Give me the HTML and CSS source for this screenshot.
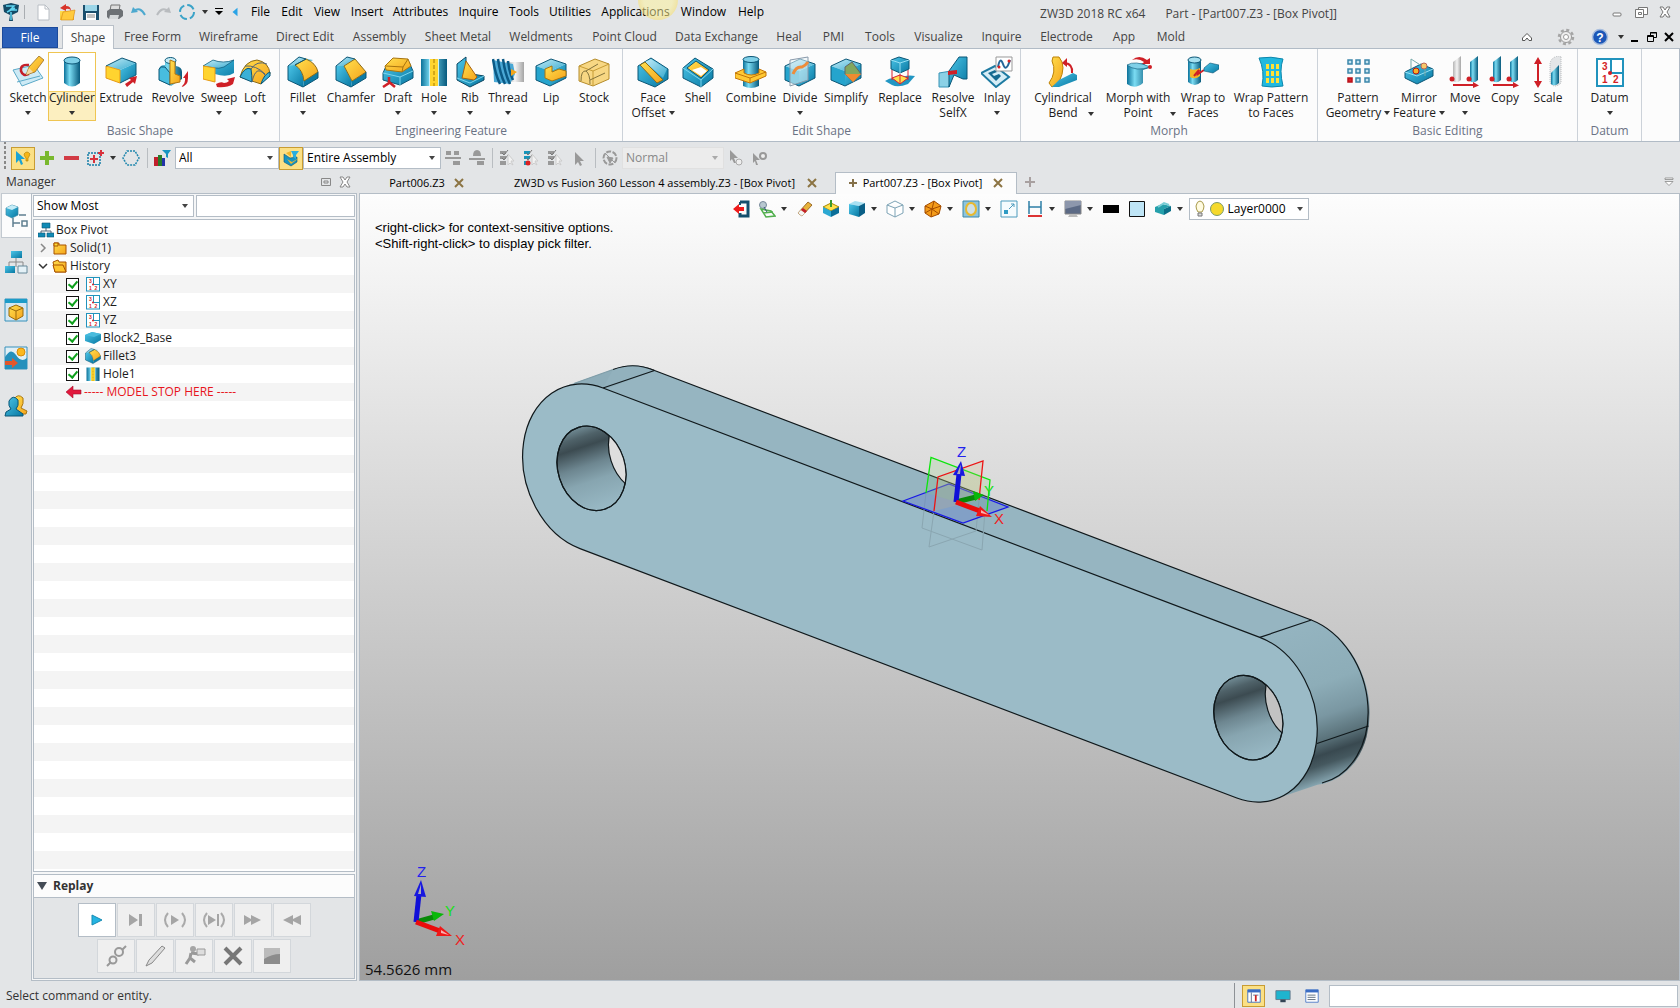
FILE: index.html
```html
<!DOCTYPE html>
<html lang="en">
<head>
    <meta charset="UTF-8">
    <title>ZW3D 2018 RC x64</title>
    <link rel="stylesheet" href="styles.css">
</head>
<body>
<svg class="defs" width="0" height="0" aria-hidden="true">
    <defs>
        <linearGradient id="b" x1="0" y1="0" x2="1" y2="1"><stop offset="0" stop-color="#4cc5e8"/><stop offset="1" stop-color="#0878a2"/></linearGradient>
        <linearGradient id="bl" x1="0" y1="0" x2="1" y2="1"><stop offset="0" stop-color="#c4ecf7"/><stop offset="1" stop-color="#38abd0"/></linearGradient>
        <linearGradient id="bc"><stop offset="0" stop-color="#0b7199"/><stop offset=".35" stop-color="#7bdcf3"/><stop offset="1" stop-color="#07597c"/></linearGradient>
        <linearGradient id="y" x1="0" y1="0" x2="1" y2="1"><stop offset="0" stop-color="#ffe04f"/><stop offset="1" stop-color="#f5a31b"/></linearGradient>
        <linearGradient id="g" x1="0" y1="0" x2="1" y2="0"><stop offset="0" stop-color="#b5b5b5"/><stop offset=".5" stop-color="#f4f4f4"/><stop offset="1" stop-color="#a5a5a5"/></linearGradient>
        <linearGradient id="endcap" gradientUnits="userSpaceOnUse" x1="1260" y1="637" x2="1311" y2="787">
            <stop offset="0" stop-color="#94b4c0"/><stop offset=".4" stop-color="#8dadb8"/><stop offset=".6" stop-color="#7a97a2"/><stop offset=".74" stop-color="#5b737b"/><stop offset=".83" stop-color="#394950"/><stop offset=".89" stop-color="#45585f"/><stop offset="1" stop-color="#86a5b0"/>
        </linearGradient>
        <linearGradient id="bore" gradientUnits="userSpaceOnUse" x1="-13" y1="-39" x2="13" y2="39" gradientTransform="rotate(-72.4)">
            <stop offset="0" stop-color="#6b848d"/><stop offset=".1" stop-color="#4f6269"/><stop offset=".22" stop-color="#3c4b51"/><stop offset=".45" stop-color="#6d8690"/><stop offset=".65" stop-color="#87a5b0"/><stop offset="1" stop-color="#98b8c4"/>
        </linearGradient>
        <clipPath id="hole"><ellipse rx="43" ry="33.5" transform="rotate(72.4)"/></clipPath>
    </defs>
    <symbol id="box" viewBox="0 0 32 32">
        <path d="M1 10 16 3 31 8 15 15Z" fill="url(#bl)"/><path d="M15 15 31 8V22L15 30Z" fill="url(#b)"/><path d="M1 10 15 15V30L1 24Z" fill="#25a4cd"/><path d="M1 10 16 3 31 8V22L15 30 1 24Z" fill="none" stroke="#0b5676"/>
    </symbol>
    <symbol id="datum" viewBox="0 0 32 32">
        <rect x="3" y="3" width="26" height="27" fill="#fff" stroke="#2193bd" stroke-width="2"/><path d="M17 3V17H29" fill="none" stroke="#2193bd" stroke-width="2"/><circle cx="16" cy="17" r="2" fill="#d51f26"/>
    </symbol>
    <symbol id="fillet" viewBox="0 0 32 32">
        <path d="M1 10 12 1 26 4 15 11Z" fill="url(#bl)"/><path d="M1 10 8 9Q15 13 17 24L16 31 1 24Z" fill="url(#b)"/><path d="M17 24 31 15V22L16 31Z" fill="#0d7ba4"/><path d="M8 9 19 3Q29 7 31 16L17 25Q16 14 8 9Z" fill="url(#y)" stroke="#8a6b1a"/><path d="M8 9 19 3 12 1 1 10V24L16 31 31 22V16" fill="none" stroke="#0b5676"/>
    </symbol>
    <symbol id="holei" viewBox="0 0 32 32">
        <rect x="3" y="3" width="26" height="27" fill="url(#bc)"/><rect x="12" y="3" width="8" height="27" fill="#ffd52e"/><path d="M11.500 3V30M20.500 3V30" stroke="#c7f0fa"/><path d="M16 3V30" stroke="#a97a00" stroke-dasharray="4 2"/>
    </symbol>
    <symbol id="pen" viewBox="0 0 18 18"><path d="M5 3 14 12 10 12 12 16 10 17 8 13 5 16Z"/></symbol>
    <symbol id="chk" viewBox="0 0 18 18"><path d="M2 2h6v3H2zM2 7h6v3H2zM2 12h6v4H2z"/><path d="M4 4 6 6 10 1M4 9 6 11 10 6" fill="none" stroke="#777"/><path d="M10 5 16 12 13 12 15 16 12 14 10 16Z" fill="#f2f2f2" stroke="#ccc"/></symbol>
    <symbol id="caret" viewBox="0 0 6 4"><path d="M0 0H6L3 4Z"/></symbol>
    <symbol id="x" viewBox="0 0 10 10"><path d="M1 1 9 9M9 1 1 9" stroke="#8c7443" stroke-width="2"/></symbol>
</svg>

<header class="titlebar">
    <svg class="logo" viewBox="0 0 18 20"><path d="M1 3 9 1 17 3 16 10 10 13 11 19H7L8 13 2 10Z" fill="#144b67"/><path d="M4 4h8L8 8h7M5 10 13 6M9 10v8" stroke="#5fd3ef" stroke-width="1.500" fill="none"/></svg>
    <div class="quick">
        <button aria-label="New"><svg viewBox="0 0 18 18"><path d="M4 2H11L15 6V17H4Z" fill="#fff" stroke="#b9bec4"/><path d="M11 2V6H15" fill="none" stroke="#b9bec4"/></svg></button>
        <button aria-label="Open"><svg viewBox="0 0 18 18"><path d="M2 8H16V17H2Z" fill="url(#y)"/><path d="M5 9 17 7 15 17 3 17Z" fill="#ffca3d" stroke="#d58a12" stroke-width=".6"/><path d="M8 1 2 5 8 8V6Q12 5 13 8 13 3 8 3Z" fill="#d8342a"/></svg></button>
        <button aria-label="Save"><svg viewBox="0 0 18 18"><path d="M1 2H17V17H1Z" fill="#1c4f6d"/><path d="M3 2H15V8H3Z" fill="#9bd5e8"/><path d="M4 10H14V17H4Z" fill="#fff"/><path d="M5 12H13M5 14H13" stroke="#888"/></svg></button>
        <button aria-label="Print"><svg viewBox="0 0 18 18"><path d="M5 2H14L13 8H4Z" fill="#ddd" stroke="#777"/><path d="M1 8 4 6H15L17 8V13L13 16H3L1 14Z" fill="#6d7175"/><path d="M4 12H13L12 16H3Z" fill="#d5d8da"/></svg></button>
        <button aria-label="Undo"><svg viewBox="0 0 18 18"><path d="M4 8Q10 3 15 12" fill="none" stroke="#4da9cf" stroke-width="2"/><path d="M1 10 3 4 8 9Z" fill="#4da9cf"/></svg></button>
        <button aria-label="Redo"><svg viewBox="0 0 18 18"><path d="M14 8Q8 3 3 12" fill="none" stroke="#b9bcbf" stroke-width="2"/><path d="M17 10 15 4 10 9Z" fill="#b9bcbf"/></svg></button>
        <button aria-label="Regenerate"><svg viewBox="0 0 18 18"><circle cx="9" cy="9" r="7" fill="none" stroke="#3ba3c8" stroke-width="2" stroke-dasharray="8 3"/></svg></button>
        <button class="slim" aria-label="More"><svg class="caret"><use href="#caret"/></svg></button>
        <button class="mid" aria-label="Customize"><svg viewBox="0 0 10 10"><path d="M1 1H9V2H1ZM1 4H9L5 8Z"/></svg></button>
        <button class="mid" aria-label="Collapse menu"><svg viewBox="0 0 10 12"><path d="M8 1V11L2 6Z" fill="#2aa3e6"/></svg></button>
    </div>
    <nav class="menu">
        <a href="#">File</a><a href="#">Edit</a><a href="#">View</a><a href="#">Insert</a><a href="#">Attributes</a><a href="#">Inquire</a><a href="#">Tools</a><a href="#">Utilities</a><a href="#" class="pointed">Applications</a><a href="#">Window</a><a href="#">Help</a>
    </nav>
    <div class="title"><span>ZW3D 2018 RC x64</span><span>Part - [Part007.Z3 - [Box Pivot]]</span></div>
    <div class="winbtns">
        <button aria-label="Minimize"><svg viewBox="0 0 14 14"><rect x="3" y="8" width="8" height="3" rx="1" fill="#fff" stroke="#777"/></svg></button>
        <button aria-label="Restore"><svg viewBox="0 0 14 14" fill="#fff" stroke="#777"><path d="M4.500 2.500H13.500V9.500H4.500Z"/><path d="M1.500 4.500H9.500V12.500H1.500ZM4.500 7.500H7.500V9.500H4.500Z"/></svg></button>
        <button aria-label="Close"><svg viewBox="0 0 14 14"><path d="M2 2H5L7 5 9 2H12L9 7 12 12H9L7 9 5 12H2L5 7Z" fill="#fff" stroke="#777"/></svg></button>
    </div>
</header>

<div class="tabbar">
    <button class="file-tab">File</button>
    <nav class="tabs">
        <button class="on">Shape</button><button>Free Form</button><button>Wireframe</button><button>Direct Edit</button><button>Assembly</button><button>Sheet Metal</button><button>Weldments</button><button>Point Cloud</button><button>Data Exchange</button><button>Heal</button><button>PMI</button><button>Tools</button><button>Visualize</button><button>Inquire</button><button>Electrode</button><button>App</button><button>Mold</button>
    </nav>
    <div class="tabtools">
        <button aria-label="Collapse ribbon"><svg viewBox="0 0 14 14"><path d="M2.500 8 7 3.500 11.500 8V10.500H9L7 8 5 10.500H2.500Z" fill="#fff" stroke="#555"/></svg></button>
        <button aria-label="Settings"><svg viewBox="0 0 18 18"><circle cx="9" cy="9" r="7" fill="none" stroke="#a5a5a5" stroke-width="2.500" stroke-dasharray="3 2.500"/><circle cx="9" cy="9" r="5.500" fill="#eee" stroke="#999"/><circle cx="9" cy="9" r="2.500" fill="#fff" stroke="#999"/></svg></button>
        <button class="help" aria-label="Help"><svg viewBox="0 0 18 18"><circle cx="9" cy="9" r="7.500" fill="#1c57b8" stroke="#a8bede" stroke-width="1.500"/><text x="9" y="13.500" text-anchor="middle" font-family="Liberation Sans,sans-serif" font-weight="bold" font-size="12" fill="#fff">?</text></svg></button>
        <button class="slim" aria-label="Help menu"><svg class="caret"><use href="#caret"/></svg></button>
        <button class="win" aria-label="Minimize document"><svg viewBox="0 0 12 12"><path d="M2 9H9V11H2Z"/></svg></button>
        <button class="win" aria-label="Restore document"><svg viewBox="0 0 12 12" fill="none" stroke="#000"><path d="M4.500 4V1.500H10.500V6.500H8M1.500 4.500H7.500V10.500H1.500ZM4 2H11M1 5.500H8" /></svg></button>
        <button class="win" aria-label="Close document"><svg viewBox="0 0 12 12"><path d="M2 2 10 10M10 2 2 10" stroke="#000" stroke-width="2"/></svg></button>
    </div>
</div>

<div class="ribbon">
    <section class="group g-basic">
        <div class="btns">
            <button><svg viewBox="0 0 32 32"><path d="M1 14 22 9 31 22 10 30Z" fill="#cdeaf5" stroke="#5ba9c8"/><path d="M5 26 28 20" stroke="#5ba9c8"/><path d="M17 9Q8 8 9 15 11 21 17 18" fill="none" stroke="#c41f2a" stroke-width="2.500"/><path d="M14 19 17 11 27 0 32 4 23 16Z" fill="url(#y)" stroke="#8d5d12" stroke-width=".7"/><path d="M14 19 17 12 21 16Z" fill="#f3d9a8"/></svg><span>Sketch</span><svg class="caret"><use href="#caret"/></svg></button>
            <button class="active"><svg viewBox="0 0 32 32"><path d="M8 4V27Q16 34 24 27V4Z" fill="url(#bc)"/><ellipse cx="16" cy="4.500" rx="8" ry="3.500" fill="#7fd0e8" stroke="#0b5676"/></svg><span>Cylinder</span><svg class="caret"><use href="#caret"/></svg></button>
            <button><svg viewBox="0 0 32 32"><path d="M1 10 17 2 31 7 15 14Z" fill="url(#bl)"/><path d="M15 14 31 7V19L15 27Z" fill="url(#b)"/><path d="M1 10 15 14V27L1 22Z" fill="#ffd42f" stroke="#e89a14"/><path d="M1 10 17 2 31 7V19L15 27" fill="none" stroke="#0b5676"/><path d="M20 28 26 24 24 22 32 20 30 28 28 26 22 31Z" fill="#cf2027"/></svg><span>Extrude</span></button>
            <button><svg viewBox="0 0 32 32"><path d="M8 4Q13-1 19 4V10Q25 11 25 16V23L14 30 2 24V13Q3 9 8 9Z" fill="url(#bc)"/><ellipse cx="13.500" cy="4.500" rx="5.500" ry="3" fill="#c4ecf7" stroke="#0b5676"/><path d="M2 13Q4 10 8 11L13 17V29L2 24Z" fill="#48bddf" stroke="#0b5676"/><path d="M13 4 18 6V18L23 20V26L13 28Z" fill="url(#y)" stroke="#b47710"/><path d="M24 31Q29 27 28 22L26 22 31 15 31 22Q31 30 24 31Z" fill="#cf2027"/></svg><span>Revolve</span></button>
            <button><svg viewBox="0 0 32 32"><path d="M0 10 10 4Q20 8 31 4V17Q24 22 12 18V26L0 22Z" fill="url(#b)"/><path d="M0 10 10 4Q20 8 31 4L21 11Q15 13 12 12Z" fill="url(#bl)" stroke="#0b5676" stroke-width=".7"/><path d="M0 10 12 12V26L0 23Z" fill="#ffd42f" stroke="#e89a14"/><path d="M13 28Q18 25 21 27 24 27 26 25L24 23 32 21 30 28Q24 32 14 31Z" fill="#cf2027"/></svg><span>Sweep</span><svg class="caret"><use href="#caret"/></svg></button>
            <button><svg viewBox="0 0 32 32"><path d="M1 21Q5 5 18 4 30 6 31 18L22 28Z" fill="url(#y)" stroke="#8a6b1a"/><path d="M1 21Q6 10 12 13 13 19 13 26ZM22 28Q25 18 31 16V20Z" fill="#3ab0d6" stroke="#0b5676"/><path d="M12 13Q18 4 28 8M13 26Q17 8 26 19M6 10Q17 9 26 18" fill="none" stroke="#567"/></svg><span>Loft</span><svg class="caret"><use href="#caret"/></svg></button>
        </div>
        <h2>Basic Shape</h2>
    </section>
    <section class="group g-eng">
        <div class="btns">
            <button><svg><use href="#fillet"/></svg><span>Fillet</span><svg class="caret"><use href="#caret"/></svg></button>
            <button><svg viewBox="0 0 32 32"><path d="M1 10 12 1 20 3 9 10Z" fill="url(#bl)"/><path d="M1 10 9 10 17 25 16 31 1 24Z" fill="url(#b)"/><path d="M17 25 31 16V22L16 31Z" fill="#0d7ba4"/><path d="M9 10 20 3 31 16 17 25Z" fill="url(#y)" stroke="#8a6b1a"/><path d="M20 3 12 1 1 10V24L16 31 31 22V16" fill="none" stroke="#0b5676"/></svg><span>Chamfer</span></button>
            <button><svg viewBox="0 0 32 32"><path d="M1 17 5 8 27 6 31 15V22L18 29 1 24Z" fill="url(#b)" stroke="#0b5676"/><path d="M1 17 18 21 31 15M18 21V29" fill="none" stroke="#7bd5ee"/><path d="M3 10 11 2 26 3 29 10 20 16 4 14Z" fill="url(#y)" stroke="#a8740f"/><path d="M4 10 21 11 26 3M21 11 20 16" fill="none" stroke="#a8740f"/><path d="M7 21V27L1 31M7 26 13 31" stroke="#cf2027" stroke-width="2.500" fill="none"/></svg><span>Draft</span><svg class="caret"><use href="#caret"/></svg></button>
            <button><svg><use href="#holei"/></svg><span>Hole</span><svg class="caret"><use href="#caret"/></svg></button>
            <button><svg viewBox="0 0 32 32"><path d="M3 8 12 1V17L30 20V24L16 31 3 24Z" fill="url(#b)" stroke="#0b4560"/><path d="M8 22 12 5 23 21 20 24Z" fill="url(#y)" stroke="#a8620f"/><path d="M3 22 16 27 30 20" fill="none" stroke="#7bd5ee"/></svg><span>Rib</span><svg class="caret"><use href="#caret"/></svg></button>
            <button><svg viewBox="0 0 32 32"><path d="M14 6H32V26H14Z" fill="url(#g)"/><path d="M1 4 21 8 23 18 18 28 2 26Z" fill="#4aa8d5"/><path d="M1 3Q3 18 8 28M6 3Q8 18 13 28M11 3Q13 18 18 28M16 5Q17 16 21 24" fill="none" stroke="#0b5a86" stroke-width="2.500"/><path d="M19 13 25 16 19 20Z" fill="#f2a51b"/></svg><span>Thread</span><svg class="caret"><use href="#caret"/></svg></button>
            <button><svg viewBox="0 0 32 32"><use href="#box"/><path d="M10 13 17 10V16L24 13 31 15V20L17 25 10 22Z" fill="url(#y)" stroke="#a8740f"/></svg><span>Lip</span></button>
            <button><svg viewBox="0 0 32 32"><path d="M1 10 17 3 31 8V23L15 30 1 25Z" fill="#f7d783" stroke="#b58c2b"/><path d="M1 10 15 15 31 8M15 15V30" fill="none" stroke="#c79c35"/><path d="M3 25Q3 14 8 15 12 18 12 28M8 15 20 8M12 24 27 17" fill="none" stroke="#83733c"/></svg><span>Stock</span></button>
        </div>
        <h2>Engineering Feature</h2>
    </section>
    <section class="group g-edit">
        <div class="btns">
            <button><svg viewBox="0 0 32 32"><path d="M1 10 14 2 31 13V23L18 31 1 24Z" fill="url(#b)" stroke="#0b5676"/><path d="M8 6 14 3 30 13 26 22Z" fill="url(#bl)"/><path d="M3 9 8 6 26 24 20 27Z" fill="url(#y)" stroke="#8a6b1a"/></svg><span>Face</span><span class="two">Offset<svg class="caret"><use href="#caret"/></svg></span></button>
            <button><svg viewBox="0 0 32 32"><path d="M1 12 13 2 31 13V22L19 31 1 22Z" fill="url(#b)" stroke="#0b5676"/><path d="M5 12 14 5 27 14 19 22Z" fill="url(#y)" stroke="#0b5676"/><path d="M10 14 19 11 25 15 19 20Z" fill="#fff"/><path d="M1 12 19 24 31 13M19 24V31" fill="none" stroke="#7bd5ee"/></svg><span>Shell</span></button>
            <button><svg viewBox="0 0 32 32"><path d="M8 3V30Q16 34 24 30V3Z" fill="url(#bc)"/><ellipse cx="16" cy="3.500" rx="8" ry="3" fill="#7fd0e8" stroke="#0b5676"/><path d="M0 17 9 13V17Q16 21 24 17V13L31 16V20L15 27 0 22Z" fill="#ffc933" stroke="#c27409"/><path d="M0 17 15 22 31 16M15 22V27" fill="none" stroke="#c27409"/></svg><span>Combine</span></button>
            <button><svg viewBox="0 0 32 32"><use href="#box"/><path d="M6 4 24 1V24L6 30Z" fill="#e9f4f8" fill-opacity=".55" stroke="#89a"/><path d="M9 18Q12 10 18 11 22 9 24 6" fill="none" stroke="#ee8c3a" stroke-width="3"/></svg><span>Divide</span><svg class="caret"><use href="#caret"/></svg></button>
            <button><svg viewBox="0 0 32 32"><use href="#box"/><path d="M15 11 22 6 31 18 23 26 15 18Z" fill="#82a75e" stroke="#666"/><path d="M15 18 31 18 23 26Z" fill="#f08b30"/></svg><span>Simplify</span></button>
            <button><svg viewBox="0 0 32 32"><path d="M1 25Q8 20 14 23 22 18 31 20L24 28Q14 32 8 29Z" fill="#2196c3"/><path d="M8 22 16 19 24 22 16 28Z" fill="#ffe04f" stroke="#d9232e"/><path d="M8 14V24M16 18V28M24 14V24" stroke="#d9232e"/><path d="M7 4 15 1 25 4V13L16 17 7 13Z" fill="url(#b)" stroke="#0b5676"/><path d="M7 4 16 7 25 4M16 7V17" fill="none" stroke="#95dff3"/></svg><span>Replace</span></button>
            <button><svg viewBox="0 0 32 32"><path d="M2 17 14 15V22L12 31H2Z" fill="#8bd1e6" stroke="#3894b6"/><path d="M12 15 22 1H30V23H26L17 19 12 31Z" fill="url(#b)" stroke="#0b5676"/><path d="M11 15 20 14V18L11 19Z" fill="#cf2027"/></svg><span>Resolve</span><span class="two">SelfX</span></button>
            <button><svg viewBox="0 0 32 32"><path d="M0 17 14 10 28 21 15 31Z" fill="#d6edf6" stroke="#1e7ba2" stroke-width="2"/><path d="M7 17 14 14 16 16 11 18 13 20 18 18 20 20 15 25Z" fill="#156a91"/><path d="M15 1H31V15H15Z" fill="#fff" stroke="#999"/><path d="M17 11Q19 0 22 8 25 17 29 4" fill="none" stroke="#26679a" stroke-width="2"/><circle cx="18" cy="11" r="1.500" fill="#d22"/><circle cx="28" cy="5" r="1.500" fill="#d22"/></svg><span>Inlay</span><svg class="caret"><use href="#caret"/></svg></button>
        </div>
        <h2>Edit Shape</h2>
    </section>
    <section class="group g-morph">
        <div class="btns">
            <button><svg viewBox="0 0 32 32"><path d="M6 1H12Q20 10 12 26L5 31 2 27Q10 16 5 5Z" fill="url(#y)" stroke="#bd8104"/><path d="M12 24 26 17 30 19V24L12 31 5 31Z" fill="url(#b)"/><path d="M25 17Q26 8 18 7" fill="none" stroke="#cf2027" stroke-width="2"/><path d="M15 7 20 2V11Z" fill="#cf2027"/></svg><span>Cylindrical</span><span class="two">Bend</span><svg class="caret corner"><use href="#caret"/></svg></button>
            <button><svg viewBox="0 0 32 32"><path d="M5 9 21 7 27 12 21 14V27Q13 34 5 28Z" fill="url(#bc)"/><path d="M5 9Q13 4 28 11 14 16 5 9Z" fill="#7fd0e8" stroke="#0b5676" stroke-width=".6"/><path d="M10 4Q17-2 25 4L28 2V8L20 8 22 6Q17 2 10 4Z" fill="#cf2027"/><circle cx="28" cy="11" r="2" fill="#cf2027"/></svg><span>Morph with</span><span class="two">Point</span><svg class="caret corner"><use href="#caret"/></svg></button>
            <button><svg viewBox="0 0 32 32"><path d="M1 4V26Q8 32 14 26V4Z" fill="url(#bc)"/><ellipse cx="7.500" cy="4" rx="6.500" ry="3" fill="#a5e0f0" stroke="#0b5676"/><path d="M3 13Q8 15 13 12V20Q8 24 3 21Z" fill="#f5b526"/><path d="M7 20 12 14 11 18 17 14" fill="none" stroke="#cf2027" stroke-width="2"/><path d="M17 12 23 7 32 9V13L26 17 17 15Z" fill="url(#b)" stroke="#0b5676" stroke-width=".6"/></svg><span>Wrap to</span><span class="two">Faces</span></button>
            <button><svg viewBox="0 0 32 32"><path d="M4 2Q16 0 28 3 24 14 28 30 16 32 7 30 10 15 4 2Z" fill="#22b9df" stroke="#0c86ac"/><path d="M11 8h3v5h-3zM16 8h3v5h-3zM21 8h3v5h-3zM11 15h3v5h-3zM16 15h3v5h-3zM21 15h3v5h-3zM11 22h3v5h-3zM16 22h3v5h-3zM21 22h3v5h-3z" fill="#ffe138"/></svg><span>Wrap Pattern</span><span class="two">to Faces</span></button>
        </div>
        <h2>Morph</h2>
    </section>
    <section class="group g-editing">
        <div class="btns">
            <button><svg viewBox="0 0 32 32" fill="#c5e4f1" stroke="#3b86ab" stroke-width="1.500"><path d="M6 4h4v4H6zM14 4h4v4h-4zM23 4h4v4h-4zM6 13h4v4H6zM14 13h4v4h-4zM23 13h4v4h-4zM14 22h4v4h-4zM23 22h4v4h-4z"/><path d="M6 22h4v4H6z" fill="#d9222a" stroke="#b9121a"/></svg><span>Pattern</span><span class="two">Geometry<svg class="caret"><use href="#caret"/></svg></span></button>
            <button><svg viewBox="0 0 32 32"><path d="M2 16 18 8 30 13V20L14 28 2 22Z" fill="url(#b)" stroke="#0b5676"/><path d="M2 16 14 20 30 13" fill="none" stroke="#95dff3"/><path d="M8 3 22 12V20M8 3V13" fill="none" stroke="#7aa"/><ellipse cx="13" cy="15" rx="3" ry="3" fill="#f6b226" stroke="#b11"/><ellipse cx="21" cy="10" rx="3" ry="3" fill="#f6c96a" stroke="#b65"/></svg><span>Mirror</span><span class="two">Feature<svg class="caret"><use href="#caret"/></svg></span></button>
            <button><svg viewBox="0 0 32 32"><path d="M4 6 12 0V24Q8 28 4 25Z" fill="url(#g)"/><path d="M21 6 29 0V24Q25 28 21 25Z" fill="url(#bc)"/><circle cx="3" cy="23" r="2.500" fill="#cf2027"/><circle cx="20" cy="23" r="2.500" fill="#cf2027"/><path d="M4 28H24V26L30 29.500 24 32V30H4Z" fill="#cf2027"/></svg><span>Move</span><svg class="caret"><use href="#caret"/></svg></button>
            <button><svg viewBox="0 0 32 32"><path d="M4 6 12 0V24Q8 28 4 25Z" fill="url(#bc)"/><path d="M21 6 29 0V24Q25 28 21 25Z" fill="url(#bc)"/><circle cx="3" cy="23" r="2.500" fill="#cf2027"/><circle cx="20" cy="23" r="2.500" fill="#cf2027"/><path d="M4 28H24V26L30 29.500 24 32V30H4Z" fill="#cf2027"/></svg><span>Copy</span></button>
            <button><svg viewBox="0 0 32 32"><path d="M18 8Q19 0 29 0V27Q23 33 18 27Z" fill="#e3e5e7" stroke="#b5b8bb" stroke-dasharray="1 1"/><path d="M19 17 27 9V27Q23 31 19 28Z" fill="url(#bc)"/><path d="M6 1 10 8H7V25H10L6 32 2 25H5V8H2Z" fill="#cf2027"/></svg><span>Scale</span></button>
        </div>
        <h2>Basic Editing</h2>
    </section>
    <section class="group g-datum">
        <div class="btns">
            <button><svg class="nums" viewBox="0 0 32 32"><use href="#datum"/><text x="8" y="14">3</text><text x="8" y="27">1</text><text x="19" y="27">2</text></svg><span>Datum</span><svg class="caret"><use href="#caret"/></svg></button>
        </div>
        <h2>Datum</h2>
    </section>
</div>

<div class="pickbar">
    <button class="lit" aria-label="Pick"><svg viewBox="0 0 18 18"><path d="M2 2 11 10 7 10 9 15 7 16 5 11 2 14Z" fill="#1aa3d4"/><path d="M10 5Q13 1 16 5 15 8 14 9V12H12V9Q10 7 10 5Z" fill="#f7b616" stroke="#a87900" stroke-width=".6"/></svg></button>
    <button aria-label="Add"><svg viewBox="0 0 18 18"><path d="M7 2H11V7H16V11H11V16H7V11H2V7H7Z" fill="#79b82e"/></svg></button>
    <button aria-label="Remove"><svg viewBox="0 0 18 18"><path d="M2 7H17V11H2Z" fill="#d23b45"/></svg></button>
    <button aria-label="Window pick"><svg viewBox="0 0 18 18"><path d="M2 4H14V16H2Z" fill="none" stroke="#167ea8" stroke-width="1.500" stroke-dasharray="2 1"/><path d="M8 6V14M4 10H12M15 1V7M12 4H18" stroke="#d8323c" stroke-width="2"/></svg></button>
    <button class="slim" aria-label="Window pick options"><svg class="caret"><use href="#caret"/></svg></button>
    <button aria-label="Polygon pick"><svg viewBox="0 0 18 18"><path d="M5 2H13L17 9 13 16H5L1 9Z" fill="none" stroke="#2187ad" stroke-width="1.500" stroke-dasharray="2 1"/></svg></button>
    <i class="sep"></i>
    <button aria-label="Filter"><svg viewBox="0 0 18 18"><path d="M1 8H5V17H1Z" fill="#c11f2c"/><path d="M5 6H9V17H5Z" fill="#287b2a"/><path d="M9 9H12V17H9Z" fill="#2233a8"/><path d="M9 1H18L15 5V9L13 8V5Z" fill="#1795c2"/></svg></button>
    <div class="combo c-all"><select aria-label="Pick filter"><option>All</option></select></div>
    <button class="lit" aria-label="Pick scope"><svg viewBox="0 0 18 18"><path d="M2 5 8 9 15 8V13L9 17 2 13Z" fill="#1794c0" stroke="#0b5676" stroke-width=".6"/><path d="M4 4 9 2 9 8Z" fill="#f1b62b"/><path d="M5 10 10 13 17 9 9 15Z" fill="#f1b62b"/><path d="M9 2H17L14 6V10L11 8V6Z" fill="#29aede"/></svg></button>
    <div class="combo c-entire"><select aria-label="Scope"><option>Entire Assembly</option></select></div>
    <button class="dim" aria-label="Chain"><svg viewBox="0 0 18 18"><path d="M2 2h5v4H2zM10 2h5v4h-5zM1 8h16v2H1zM9 12h7v4H9z"/></svg></button>
    <button class="dim" aria-label="Loop"><svg viewBox="0 0 18 18"><path d="M5 7Q5 1 9 1T13 7ZM1 9h16v2H1zM9 12h7v4H9z"/></svg></button>
    <i class="sep near"></i>
    <button class="dim" aria-label="Pick all"><svg><use href="#chk"/></svg></button>
    <button aria-label="Pick last"><svg viewBox="0 0 18 18"><use href="#chk" fill="#1694ba"/><circle cx="6" cy="14" r="2.500" fill="#d22"/></svg></button>
    <button class="dim" aria-label="Pick list"><svg><use href="#chk"/></svg></button>
    <button class="dim" aria-label="Pick next"><svg><use href="#pen"/></svg></button>
    <i class="sep"></i>
    <button class="dim" aria-label="Hide"><svg viewBox="0 0 18 18"><circle cx="9" cy="9" r="6.500" fill="none" stroke="#999" stroke-width="2" stroke-dasharray="5 1.500"/><path d="M4 4 14 14M6 8 12 9 9 14Z" stroke="#999"/></svg></button>
    <div class="combo c-normal"><select aria-label="Mode" disabled><option>Normal</option></select></div>
    <button class="dim" aria-label="Pick point"><svg viewBox="0 0 18 18"><path d="M3 1 11 9 7 9 9 14 7 14 5 10 3 12Z"/><circle cx="12" cy="13" r="3" fill="#eee" stroke="#aaa"/></svg></button>
    <button class="dim" aria-label="Pick options"><svg viewBox="0 0 18 18"><path d="M2 4 9 11 5 11 7 16 5 16 4 12 2 14Z"/><circle cx="12" cy="7" r="3" fill="#eee" stroke="#999" stroke-width="2"/></svg></button>
</div>

<main class="work">
    <aside class="manager">
        <div class="mgr-title"><span>Manager</span>
            <button aria-label="Float"><svg viewBox="0 0 14 14"><path d="M2.500 3.500H11.500V10.500H2.500ZM5 6H9V8H5Z" fill="none" stroke="#888"/></svg></button>
            <button aria-label="Close manager"><svg viewBox="0 0 14 14"><path d="M2 2H5L7 5 9 2H12L9 7 12 12H9L7 9 5 12H2L5 7Z" fill="#fff" stroke="#888"/></svg></button>
        </div>
        <div class="mgr-body">
            <nav class="rail">
                <button class="on" aria-label="History"><svg viewBox="0 0 24 24"><path d="M1 4 7 1 13 3V11L7 14 1 11Z" fill="url(#b)" stroke="#3a86a5" stroke-width=".7"/><path d="M1 4 7 6 13 3 7 1Z" fill="#c4ecf7"/><path d="M14 11H21M8 14V23M8 19H15M17 17h5v5h-5z" fill="none" stroke="#5f7f90" stroke-width="1.500"/></svg></button>
                <button aria-label="Assembly tree"><svg viewBox="0 0 24 24"><path d="M12 7V17M5 17V12H19V17" fill="none" stroke="#888"/><path d="M7 1H18V8H7Z" fill="url(#b)"/><path d="M1 16H11V23H1Z" fill="url(#b)"/><path d="M14 16H23V23H14Z" fill="#e4f1f7" stroke="#689"/></svg></button>
                <button aria-label="Views"><svg viewBox="0 0 24 24"><path d="M1 1H23V23H1Z" fill="#d4e7f2" stroke="#3691bb"/><path d="M1 1H23V5H1Z" fill="#1d9cc8"/><path d="M5 10 12 7 19 10V18L12 22 5 18Z" fill="url(#y)" stroke="#9b6a0b"/><path d="M5 10 12 13 19 10M12 13V22" fill="none" stroke="#9b6a0b"/></svg></button>
                <button aria-label="Visual"><svg viewBox="0 0 24 24"><path d="M1 1H23V23H1Z" fill="#e0eff6" stroke="#3691bb"/><path d="M1 11Q7 1 12 9T23 12V23H1Z" fill="#2590bc"/><circle cx="17" cy="6" r="4" fill="#fbb81f" stroke="#d88c0a"/><path d="M1 15H8V12L14 17 8 22V19H1Z" fill="#e2572c"/></svg></button>
                <button aria-label="Role"><svg viewBox="0 0 24 24"><path d="M10 5Q14-1 19 4 20 10 17 14L23 17 22 20H12Z" fill="url(#y)" stroke="#a97713"/><path d="M5 7Q9 0 14 6 15 12 12 15L19 20V22H1L2 18 7 15Q4 12 5 7Z" fill="url(#b)" stroke="#0b5676"/></svg></button>
            </nav>
            <div class="panel">
                <div class="finder">
                    <div class="combo"><select aria-label="Show"><option>Show Most</option></select></div>
                    <input type="text" aria-label="Search tree">
                </div>
                <ul class="tree">
                    <li><svg viewBox="0 0 16 16"><path d="M8 5V9M3 11V9H13V11" stroke="#567" fill="none"/><path d="M4 1H12V6H4ZM0 11H7V15H0ZM9 11H16V15H9Z" fill="#118ab5" stroke="#0b5676" stroke-width=".6"/></svg>Box Pivot</li>
                    <li class="fold"><svg class="tw" viewBox="0 0 10 10"><path d="M3 1 7 5 3 9" fill="none" stroke="#888" stroke-width="1.500"/></svg><svg viewBox="0 0 16 16"><path d="M2 3H7V5H14V14H2Z" fill="url(#y)" stroke="#a85200"/><path d="M2 3H6V6H2Z" fill="#fd3" stroke="#a85200"/></svg>Solid(1)</li>
                    <li class="fold"><svg class="tw" viewBox="0 0 10 10"><path d="M1 3 5 7 9 3" fill="none" stroke="#333" stroke-width="1.500"/></svg><svg viewBox="0 0 16 16"><path d="M1 4 6 2 7 4H14V14H3Z" fill="url(#y)" stroke="#a85200"/><path d="M1 7H11L14 14H3Z" fill="#ffc52e" stroke="#a85200"/></svg>History</li>
                    <li class="leaf"><label><input type="checkbox" checked><svg class="nums" viewBox="0 0 32 32"><use href="#datum"/><text x="8" y="14">3</text><text x="8" y="27">1</text><text x="19" y="27">2</text></svg>XY</label></li>
                    <li class="leaf"><label><input type="checkbox" checked><svg class="nums" viewBox="0 0 32 32"><use href="#datum"/><text x="8" y="14">3</text><text x="8" y="27">1</text><text x="19" y="27">2</text></svg>XZ</label></li>
                    <li class="leaf"><label><input type="checkbox" checked><svg class="nums" viewBox="0 0 32 32"><use href="#datum"/><text x="8" y="14">3</text><text x="8" y="27">1</text><text x="19" y="27">2</text></svg>YZ</label></li>
                    <li class="leaf"><label><input type="checkbox" checked><svg viewBox="0 0 16 16"><path d="M0 5 7 2 16 4V10L9 14 0 11Z" fill="url(#b)"/><path d="M0 5 7 2 16 4 9 7Z" fill="#49bbdd"/></svg>Block2_Base</label></li>
                    <li class="leaf"><label><input type="checkbox" checked><svg><use href="#fillet"/></svg>Fillet3</label></li>
                    <li class="leaf"><label><input type="checkbox" checked><svg><use href="#holei"/></svg>Hole1</label></li>
                    <li class="leaf stop"><svg viewBox="0 0 16 16"><path d="M0 8 7 2V6H15V10H7V14Z" fill="#e2183c" stroke="#a5112d" stroke-width=".6"/></svg>----- MODEL STOP HERE -----</li>
                </ul>
                <div class="replay">
                    <h3><svg viewBox="0 0 10 8"><path d="M0 0H10L5 8Z" fill="#444b55"/></svg>Replay</h3>
                    <div class="deck">
                        <button class="go" aria-label="Play"><svg viewBox="0 0 24 18"><path d="M7 4 17 9 7 14Z" fill="#25b4e2" stroke="#168bb3"/></svg></button>
                        <button aria-label="Step"><svg viewBox="0 0 24 18"><path d="M5 3 14 9 5 15ZM15 3H18V15H15Z"/></svg></button>
                        <button aria-label="Play part"><svg viewBox="0 0 24 18"><path d="M8 4 16 9 8 14Z"/><path d="M5 2Q-1 9 5 16M19 2Q25 9 19 16" fill="none" stroke="#aaa" stroke-width="2"/></svg></button>
                        <button aria-label="Step part"><svg viewBox="0 0 24 18"><path d="M6 4 14 9 6 14ZM15 3H17V15H15Z"/><path d="M5 2Q-1 9 5 16M19 2Q25 9 19 16" fill="none" stroke="#aaa" stroke-width="2"/></svg></button>
                        <button aria-label="Fast forward"><svg viewBox="0 0 24 18"><path d="M3 4 10 8V4L20 9 10 14V10L3 14Z"/></svg></button>
                        <button aria-label="Rewind"><svg viewBox="0 0 24 18"><path d="M21 4 13 8V4L3 9 13 14V10L21 14Z"/></svg></button>
                    </div>
                    <div class="deck">
                        <button aria-label="Link"><svg viewBox="0 0 24 24"><path d="M3 22 7 18M18 6 22 2" stroke="#999" stroke-width="2"/><circle cx="9" cy="16" r="3.500" fill="none" stroke="#999" stroke-width="2"/><circle cx="15" cy="8" r="4" fill="none" stroke="#999" stroke-width="2"/></svg></button>
                        <button aria-label="Edit"><svg viewBox="0 0 24 24"><path d="M3 22 6 16 19 2 22 4 9 19Z" fill="#ddd" stroke="#888"/></svg></button>
                        <button aria-label="Redefine"><svg viewBox="0 0 24 24"><circle cx="11" cy="5" r="3"/><path d="M9 9 17 10M9 9 8 14 13 18M8 14 4 20" fill="none" stroke="#999" stroke-width="3"/><path d="M15 5H23V11H15Z" fill="#ddd" stroke="#999"/></svg></button>
                        <button aria-label="Delete"><svg viewBox="0 0 24 24"><path d="M4 4 20 20M20 4 4 20" stroke="#777" stroke-width="4"/></svg></button>
                        <button aria-label="Stop"><svg viewBox="0 0 24 24"><path d="M4 4H20V20H4Z" fill="#8c8c8c"/><path d="M4 4H20V10Q12 10 4 15Z" fill="#bbb"/></svg></button>
                    </div>
                </div>
            </div>
        </div>
    </aside>

    <section class="docs">
        <nav class="doctabs">
            <div class="doctab d1"><button>Part006.Z3</button><button class="x" aria-label="Close Part006.Z3"><svg><use href="#x"/></svg></button></div>
            <div class="doctab d2"><button>ZW3D vs Fusion 360 Lesson 4 assembly.Z3 - [Box Pivot]</button><button class="x" aria-label="Close lesson 4 assembly"><svg><use href="#x"/></svg></button></div>
            <div class="doctab d3"><svg viewBox="0 0 10 10"><path d="M5 1V9M1 5H9" stroke="#85714a" stroke-width="2"/></svg><button>Part007.Z3 - [Box Pivot]</button><button class="x" aria-label="Close Part007.Z3"><svg><use href="#x"/></svg></button></div>
            <button class="x new" aria-label="New document"><svg viewBox="0 0 10 10"><path d="M5 0V10M0 5H10" stroke="#a8a0a0" stroke-width="2"/></svg></button>
            <button class="x list" aria-label="Document list"><svg viewBox="0 0 10 10"><path d="M1 1H9V2.500H1ZM1 4.500H9L5 8.500Z" fill="#fff" stroke="#888" stroke-width=".8"/></svg></button>
        </nav>
        <div class="viewport">
            <svg class="scene" viewBox="361 194 1317 786">
                <g stroke="#10181b" stroke-width="1.200" stroke-linejoin="round">
                    <path d="M654.500 370.500 1311.300 620 1288 780.500 631 531A85 66.200 72.400 0 1 654.500 370.500Z" fill="#96b5c1"/>
                    <path d="M566 386 613 369.500 654 371 603 390Z" fill="#8eadb9" stroke="none"/>
                    <path d="M613 369.500Q634 361 654.500 370.500L603 388Z" fill="#92b1bd" stroke="none"/>
                    <path d="M613 369.500Q634 361.500 654.500 370.500" fill="none"/>
                    <path d="M1259.800 637.400 1311.300 620A86 67 72.400 0 1 1317.500 784.700L1266 802.200 1200 740Z" fill="url(#endcap)" stroke="none"/>
                    <path d="M1311.300 620A86 67 72.400 0 1 1322 783" fill="none"/>
                    <path d="M574 383.500 613 369.500" stroke="#7f9da8"/>
                    <path d="M603 388 654.500 370.500M1259.800 637.400 1311.300 620M1317 743.500 1368.500 726"/>
                    <path d="M603 388 1259.800 637.400A85 66.200 72.400 0 1 1236.800 798L580 548.600A85 66.200 72.400 0 1 603 388Z" fill="#9bbbc7"/>
                    <g transform="translate(591.500 468.300)">
                        <ellipse rx="43" ry="33.500" transform="rotate(72.400)" fill="url(#bore)"/>
                        <g clip-path="url(#hole)"><ellipse rx="43" ry="33.500" transform="translate(51.500 -17.500) rotate(72.400)" fill="#dedede"/></g>
                        <ellipse rx="43" ry="33.500" transform="rotate(72.400)" fill="none"/>
                    </g>
                    <g transform="translate(1248.300 717.700)">
                        <ellipse rx="43" ry="33.500" transform="rotate(72.400)" fill="url(#bore)"/>
                        <g clip-path="url(#hole)"><ellipse rx="43" ry="33.500" transform="translate(51.500 -17.500) rotate(72.400)" fill="#c2c2c2"/></g>
                        <ellipse rx="43" ry="33.500" transform="rotate(72.400)" fill="none"/>
                    </g>
                </g>
                <!-- datum planes -->
                <g fill="none" stroke="#8aa6b1"><path d="M926 493 922 528 982 550 985 511M934 511 929 547 976 531 979 500"/></g>
                <g stroke-width="1.300">
                    <path d="M903 501 949 484 1008 507 963 523Z" fill="#4862d8" fill-opacity=".25" stroke="#1919e6"/>
                    <path d="M926 493 931 457.500 990 480 987 511" fill="#8ad07a" fill-opacity=".2" stroke="#0be60b"/>
                    <path d="M934 511 938 477 983 461 979 500" fill="#d8b97a" fill-opacity=".2" stroke="#ec1414"/>
                </g>
                <g class="triad" transform="translate(956 502)">
                    <path d="M0 0 20-5" stroke="#088a08" stroke-width="5"/><path d="M17-11 28-7 19-1Z" fill="#08b808"/>
                    <path d="M0 0 3-28" stroke="#1010d8" stroke-width="5"/><path d="M-3-27 5-41 9-26Z" fill="#1818e0"/><path d="M1-28 5-38 4-28Z" fill="#aab"/>
                    <path d="M0 0 24 9" stroke="#ea0c0c" stroke-width="5"/><path d="M24 4 36 15 20 14Z" fill="#f01818"/><path d="M25 8 33 13 25 11Z" fill="#f9b0b0"/>
                    <text x="1" y="-45" fill="#2222ee">Z</text><text x="28" y="-6" fill="#16e016">Y</text><text x="38" y="22" fill="#ee2222">X</text>
                </g>
                <g class="triad" transform="translate(416 922)">
                    <path d="M0 0 18-5" stroke="#088a08" stroke-width="5"/><path d="M15-11 28-8 18-1Z" fill="#08b808"/>
                    <path d="M0 0 3-28" stroke="#1010d8" stroke-width="5"/><path d="M-2-26 5-42 10-25Z" fill="#1818e0"/><path d="M2-28 5-38 5-28Z" fill="#aab"/>
                    <path d="M0 0 24 9" stroke="#ea0c0c" stroke-width="5"/><path d="M24 4 36 14 20 14Z" fill="#f01818"/><path d="M25 8 33 13 25 11Z" fill="#f9b0b0"/>
                    <text x="1" y="-45" fill="#2222ee">Z</text><text x="29" y="-6" fill="#16e016">Y</text><text x="39" y="23" fill="#ee2222">X</text>
                </g>
            </svg>
            <div class="viewbar">
                <button aria-label="Exit"><svg viewBox="0 0 18 18"><path d="M8 2H16V16H8V13" fill="none" stroke="#14506e" stroke-width="3"/><path d="M8 2V5" stroke="#14506e" stroke-width="2"/><path d="M1 9 7 4V7H12V11H7V14Z" fill="#ee1c1c"/></svg></button>
                <button class="dd" aria-label="Triad"><svg viewBox="0 0 18 18"><circle cx="5" cy="5" r="3.500" fill="#b8c8d0" stroke="#789"/><path d="M3 9 8 17 17 16 13 11ZM5 13 15 12" fill="none" stroke="#52b04e" stroke-width="1.500"/><path d="M6 7 9 12" stroke="#357"/></svg><svg class="caret"><use href="#caret"/></svg></button>
                <button aria-label="Erase"><svg viewBox="0 0 18 18"><path d="M2 13 12 2 16 5 6 16Z" fill="#e8b33a" stroke="#9a6b2a"/><path d="M2 13 5 10 9 13 6 16Z" fill="#f5f5f5"/><path d="M5 10 7 8 11 11 9 13Z" fill="#c3202d"/></svg></button>
                <button aria-label="View plane"><svg viewBox="0 0 18 18"><path d="M1 7 9 3 17 7 9 11Z" fill="#ffe14a" stroke="#a80"/><path d="M1 7 9 11V17L1 13Z" fill="#2ca8d2"/><path d="M9 11 17 7V13L9 17Z" fill="#0b6f98"/><path d="M9 0V7" stroke="#3a9a2c" stroke-width="2"/></svg></button>
                <button class="dd" aria-label="Shaded"><svg viewBox="0 0 18 18"><path d="M1 4 7 1 17 3 11 6Z" fill="#a8e0f2"/><path d="M1 4 11 6V17L1 14Z" fill="url(#b)"/><path d="M11 6 17 3V13L11 17Z" fill="#0a5f86"/></svg><svg class="caret"><use href="#caret"/></svg></button>
                <button class="dd" aria-label="Wireframe"><svg viewBox="0 0 18 18"><path d="M1 5 9 1 17 5V13L9 17 1 13ZM1 5 9 8 17 5M9 8V17" fill="#fff" stroke="#7da3b5"/></svg><svg class="caret"><use href="#caret"/></svg></button>
                <button class="dd" aria-label="Zebra"><svg viewBox="0 0 18 18"><path d="M1 6 10 1 17 6 15 14 7 17 1 13Z" fill="#f49c1a" stroke="#a34b00"/><path d="M1 6 8 9 17 6M8 9 7 17M8 9 15 14M10 1 8 9 1 13" fill="none" stroke="#a34b00"/></svg><svg class="caret"><use href="#caret"/></svg></button>
                <button class="dd" aria-label="Zoom"><svg viewBox="0 0 18 18"><path d="M1 1H17V17H1Z" fill="#8ec5dd" stroke="#3c87a8"/><ellipse cx="9" cy="9" rx="5" ry="6" fill="#cfe0e5" stroke="#e8b92e" stroke-width="2"/></svg><svg class="caret"><use href="#caret"/></svg></button>
                <button aria-label="Fit"><svg viewBox="0 0 18 18"><path d="M1 1H17V17H1Z" fill="#f5fbfd" stroke="#4c9bbd"/><path d="M4 10h4v4H4z" fill="#2e9bc4"/><path d="M9 9 14 4M11 4h3v3" fill="none" stroke="#4c9bbd"/></svg></button>
                <button class="dd" aria-label="Dimension"><svg viewBox="0 0 18 18"><path d="M3 1V14M15 1V14M3 7H15" stroke="#2e7fa6" stroke-width="1.500"/><path d="M2 15H16V17H2Z" fill="#d33"/></svg><svg class="caret"><use href="#caret"/></svg></button>
                <button class="dd" aria-label="Display"><svg viewBox="0 0 18 18"><path d="M1 1H17V14H1Z" fill="#5c6a85" stroke="#888"/><path d="M1 1H17V5L1 9Z" fill="#8d97ac"/><path d="M6 14H12L14 17H4Z" fill="#bbb"/></svg><svg class="caret"><use href="#caret"/></svg></button>
                <button aria-label="Line colour"><svg viewBox="0 0 18 18"><path d="M1 5H17V13H1Z"/></svg></button>
                <button aria-label="Background"><svg viewBox="0 0 18 18"><path d="M1.500 1.500H16.500V16.500H1.500Z" fill="#bfe5f6" stroke="#111"/></svg></button>
                <button class="dd" aria-label="Layers"><svg viewBox="0 0 18 18"><path d="M1 7 8 4 17 6 10 9ZM1 7 10 9V15L1 12Z" fill="#25a0ab"/><path d="M10 9 17 6V11L10 15Z" fill="#0b6f88"/><path d="M4 7 10 3 15 5" fill="none" stroke="#7acdd5" stroke-width="2"/></svg><svg class="caret"><use href="#caret"/></svg></button>
                <div class="combo c-layer">
                    <select aria-label="Layer"><option>Layer0000</option></select>
                    <svg viewBox="0 0 36 18"><path d="M5 6Q6 1 9 1T13 6Q13 9 11 12H7Q5 9 5 6Z" fill="#fffbe0" stroke="#a89a4a"/><path d="M7 13H11V16H7Z" fill="#ddd" stroke="#777"/><circle cx="26" cy="9" r="6.500" fill="#f5d92c" stroke="#7a9a6a"/></svg>
                </div>
            </div>
            <p class="hint">&lt;right-click&gt; for context-sensitive options.<br>&lt;Shift-right-click&gt; to display pick filter.</p>
            <p class="measure">54.5626 mm</p>
        </div>
    </section>
</main>

<footer class="status">
    <span>Select command or entity.</span>
    <div class="status-right">
        <button class="lit" aria-label="Manager pane"><svg viewBox="0 0 18 18"><path d="M2 2H16V16H2Z" fill="#fff" stroke="#3a6cc4"/><path d="M2 2H16V5H2Z" fill="#3a6cc4"/><path d="M6 5V16M8 8H14" stroke="#568"/><path d="M10 8H12V15H10Z" fill="#c22"/></svg></button>
        <button aria-label="Output"><svg viewBox="0 0 18 18"><path d="M1 3H17V13H1Z" fill="#1fb4cf" stroke="#678"/><path d="M6 13H12V16H6Z" fill="#345"/></svg></button>
        <button aria-label="Message list"><svg viewBox="0 0 18 18"><path d="M2 2H16V16H2Z" fill="#fff" stroke="#4a78c8"/><path d="M2 2H16V5H2Z" fill="#3a6cc4"/><path d="M4 8H13M4 10.500H13M4 13H13" stroke="#567"/></svg></button>
        <input type="text" aria-label="Command">
    </div>
</footer>
</body>
</html>
```

FILE: styles.css
```css
*{margin: 0; padding: 0; box-sizing: border-box;}
body{
    display: flex;
    flex-direction: column;
    height: 100vh;
    overflow: hidden;
    background: #e3e5e7;
    color: #1c1c1c;
    font: 12px/16px "Open Sans", "Noto Sans", sans-serif;
}
button, select, input{
    font: inherit;
    color: inherit;
}
button{
    border: 0;
    background: none;
    white-space: nowrap;
}
a{color: inherit; text-decoration: none;}
svg{display: block; flex: none;}
.defs{position: absolute;}
.caret{width: 6px; height: 4px; fill: #333;}
.nums text{
    font: bold 10px "Liberation Sans", sans-serif;
    fill: #d51f26;
}

/* title bar */
.titlebar{
    display: flex;
    align-items: center;
    height: 25px;
    padding-bottom: 2px;
    flex: none;
}
.logo{width: 18px; height: 20px; margin-left: 2px;}
.quick{
    display: flex;
    align-items: center;
    margin-left: 4px;
    padding-left: 6px;
    border-left: 1px solid #a9adb1;
    height: 14px;
}
.quick button{
    width: 24px;
    display: flex;
    justify-content: center;
    align-items: center;
}
.quick button svg{width: 18px; height: 18px;}
.quick .slim{width: 12px;}
.quick .mid{width: 16px;}
.quick .mid svg{width: 10px; height: 10px;}
.quick .slim .caret, .tabtools .slim .caret, .pickbar .slim .caret{width: 6px; height: 4px;}
.menu{
    display: grid;
    grid-template-columns: 31px 32px 38px 42px 65px 51px 40px 52px 79px 57px 38px;
    margin-left: 2px;
    text-align: center;
    color: #000;
}
.menu a{white-space: nowrap; justify-self: center;}
.pointed{position: relative;}
.pointed::after{
    content: "";
    position: absolute;
    left: 37px;
    top: -24px;
    width: 40px;
    height: 40px;
    border-radius: 50%;
    background: radial-gradient(rgba(255, 244, 150, 0.5) 50%, rgba(240, 205, 80, 0.7));
}
.title{
    flex: 1;
    display: flex;
    gap: 20px;
    justify-content: flex-end;
    padding: 4px 268px 0 0;
    color: #444;
    white-space: nowrap;
}
.winbtns{display: flex; padding-right: 3px;}
.winbtns button{width: 24px; display: flex; justify-content: center;}
.winbtns svg{width: 14px; height: 14px;}

/* ribbon tabs */
.tabbar{
    display: flex;
    align-items: flex-end;
    height: 23px;
    flex: none;
}
.file-tab{
    width: 56px;
    height: 21px;
    margin: 0 4px 0 2px;
    background: #2a5fb8;
    border: 1px solid #1b4a9c;
    color: #fff;
}
.tabs{
    display: grid;
    grid-template-columns: 53px 75px 77px 76px 73px 84px 82px 85px 99px 46px 43px 50px 67px 59px 71px 44px 50px;
    height: 23px;
    color: #444;
}
.tabs .on{
    position: relative;
    z-index: 1;
    margin: 0 1px -1px 0;
    background: #fcfcfc;
    border: 1px solid #b9c0c8;
    border-bottom: 0;
}
.tabtools{
    display: flex;
    align-items: center;
    align-self: center;
    margin-left: auto;
    padding-right: 3px;
}
.tabtools button{width: 39px; display: flex; justify-content: center;}
.tabtools svg{width: 18px; height: 18px;}
.tabtools button:first-child svg{width: 14px; height: 14px;}
.tabtools .help{width: 30px;}
.tabtools .slim{width: 11px; align-items: center;}
.tabtools .win{width: 17px;}
.tabtools .win svg{width: 12px; height: 12px;}

/* ribbon */
.ribbon{
    display: flex;
    flex: none;
    height: 94px;
    background: #fcfcfc;
    border: 1px solid #b1bbc6;
}
.group{
    display: flex;
    flex-direction: column;
    border-right: 1px solid #ccd2d9;
}
.btns{
    display: grid;
    height: 70px;
    padding-top: 3px;
}
.btns button{
    position: relative;
    display: flex;
    flex-direction: column;
    align-items: center;
    height: 69px;
    padding-top: 3px;
    min-width: 0;
    line-height: 15px;
    border: 1px solid transparent;
}
.btns button > svg{width: 32px; height: 32px; margin-bottom: 2px;}
.btns button > .caret{width: 6px; height: 4px; margin: 6px 0 0;}
.btns .corner{position: absolute; right: 2px; bottom: 4px;}
.btns .active{
    background: linear-gradient(#fff 38px, #f5cf62 38px, #f5cf62 39px, #fcefc0 39px);
    border-color: #efc552;
}
.two{display: flex; align-items: center; gap: 3px;}
.group h2{
    font-size: 12px;
    font-weight: normal;
    line-height: 24px;
    text-align: center;
    color: #6a7284;
}
.g-basic{width: 279px;}
.g-basic .btns{grid-template-columns: 40px 48px 50px 54px 38px 34px; padding-left: 7px;}
.g-eng{width: 343px;}
.g-eng .btns{grid-template-columns: 44px 52px 42px 30px 42px 34px 52px 34px; padding-left: 1px;}
.g-edit{width: 398px;}
.g-edit .btns{grid-template-columns: 44px 46px 60px 38px 54px 54px 52px 36px; padding-left: 8px;}
.g-morph{width: 297px;}
.g-morph .btns{grid-template-columns: 68px 82px 48px 88px; padding-left: 8px;}
.g-editing{width: 260px;}
.g-editing .btns{grid-template-columns: 62px 60px 32px 48px 38px; padding-left: 9px;}
.g-datum{width: 64px;}
.g-datum .btns{justify-content: center;}

/* selection toolbar */
.pickbar{
    display: flex;
    align-items: center;
    flex: none;
    height: 29px;
    padding: 3px 0 0 8px;
    margin-left: 3px;
    background: radial-gradient(#888 1px, transparent 1px) 0 8px / 4px 5px repeat-y;
}
.pickbar button{
    display: flex;
    align-items: center;
    justify-content: center;
    width: 24px;
    height: 23px;
}
.pickbar .slim{width: 12px;}
.pickbar svg{width: 18px; height: 18px;}
.pickbar .dim{fill: #999;}
.lit, .pickbar .lit{
    background: #fbe085;
    border: 1px solid #c89c33;
}
.sep{width: 1px; height: 20px; margin: 0 2px 0 4px; background: #b9bdc1;}
.near{margin-left: 3px;}
.combo{position: relative; height: 22px;}
.combo select{
    appearance: none;
    width: 100%;
    height: 100%;
    padding: 0 3px;
    border: 1px solid #b4bdc6;
    border-radius: 0;
    background: #fff;
    color: #000;
}
.combo::after{
    content: "";
    position: absolute;
    right: 6px;
    top: 9px;
    border: 3px solid transparent;
    border-top: 4px solid #444;
    border-bottom: 0;
    pointer-events: none;
}
.c-all{width: 104px; margin-left: 1px;}
.c-entire{width: 138px;}
.c-normal{width: 102px;}
.c-normal select:disabled{
    background: #ececec;
    border-color: #e0e0e0;
    color: #888;
    opacity: 1;
}
.c-normal::after{border-top-color: #aaa;}

/* work area */
.work{
    display: grid;
    grid-template-columns: 359px 1fr;
    flex: 1;
    min-height: 0;
}
.manager, .docs{display: flex; flex-direction: column; min-width: 0; min-height: 0;}
.mgr-title{
    display: flex;
    align-items: center;
    height: 22px;
    padding: 0 5px 0 6px;
    color: #333;
}
.mgr-title span{flex: 1;}
.mgr-title button{width: 19px; display: flex; justify-content: center;}
.mgr-title svg{width: 14px; height: 14px;}
.mgr-body{display: flex; flex: 1; min-height: 0;}
.rail{width: 31px; padding-left: 1px; flex: none;}
.rail button{
    width: 30px;
    height: 48px;
    display: flex;
    align-items: center;
    justify-content: center;
}
.rail .on{height: 45px; background: #fcfcfc; border: 1px solid #c2c9d0; border-right: 0;}
.rail svg{width: 24px; height: 24px;}
.panel{
    flex: 1;
    display: flex;
    flex-direction: column;
    margin-right: 2px;
    padding: 1px;
    border: 1px solid #b4bdc6;
    background: #f5f6f7;
    min-width: 0;
}
.finder{display: grid; grid-template-columns: 161px 1fr; gap: 2px; margin-bottom: 2px;}
.finder input{
    min-width: 0;
    border: 1px solid #b4bdc6;
    background: #fff;
}
.tree{
    flex: 1;
    list-style: none;
    padding: 1px 0 0;
    border: 1px solid #b4bdc6;
    background: repeating-linear-gradient(#fff 0 18px, #f4f4f4 18px 36px) 0 1px;
    color: #1c1c1c;
}
.tree li{
    display: flex;
    align-items: center;
    gap: 2px;
    height: 18px;
    padding-left: 4px;
    white-space: nowrap;
}
.tree svg{width: 16px; height: 16px;}
.tree .tw{width: 10px; height: 10px; margin-right: 2px;}
.tree .leaf{padding-left: 32px;}
.tree label{display: flex; align-items: center; gap: 2px;}
.tree input{
    appearance: none;
    width: 13px;
    height: 13px;
    margin-right: 4px;
    border: 1px solid #111;
    background: #fff;
    display: grid;
    place-items: center;
}
.tree input:checked::after{
    content: "";
    width: 4px;
    height: 7px;
    margin-top: -2px;
    border: solid #0fa01c;
    border-width: 0 2px 2px 0;
    transform: rotate(40deg);
}
.tree .stop{color: #e8141c;}
.replay{
    margin-top: 2px;
    padding-bottom: 3px;
    border: 1px solid #b4bdc6;
    background: #e3e5e7;
}
.replay h3{
    display: flex;
    align-items: center;
    gap: 6px;
    height: 23px;
    margin-bottom: 5px;
    padding-left: 3px;
    background: #fcfcfc;
    border-bottom: 1px solid #b4bdc6;
    font-size: 12px;
    color: #333;
}
.replay h3 svg{width: 10px; height: 8px;}
.deck{display: flex; justify-content: center; gap: 1px; margin-bottom: 2px;}
.deck button{
    display: flex;
    align-items: center;
    justify-content: center;
    width: 38px;
    height: 34px;
    background: #efefef;
    border: 1px solid #d3d7db;
}
.deck .go{background: #fff; border-color: #b4bdc6;}
.deck svg{width: 24px; height: 24px; fill: #a5a5a5;}

/* document tabs */
.doctabs{display: flex; align-items: center; height: 22px; font-size: 11px;}
.doctab{display: flex; align-items: center; height: 22px; padding-top: 2px; color: #000;}
.doctab svg{width: 10px; height: 10px;}
.doctab > button:not(.x){flex: 1; min-width: 0;}
.x{width: 22px; display: flex; justify-content: center;}
.x svg{width: 10px; height: 10px;}
.d1{width: 84px; margin-left: 27px;}
.d2{width: 315px; margin-left: 38px;}
.d3{
    position: relative;
    width: 182px;
    margin: 0 2px -1px 12px;
    padding: 0 7px 0 12px;
    background: #fcfcfc;
    border: 1px solid #b4bdc6;
    border-bottom: 0;
    z-index: 1;
}
.list{margin-left: auto;}

/* viewport */
.viewport{
    position: relative;
    flex: 1;
    min-height: 0;
    border: 1px solid #b4bdc6;
    background: linear-gradient(#fdfdfd, #9f9f9f);
}
.scene{position: absolute; inset: 0; width: 100%; height: 100%;}
.triad{font: 15px "Liberation Sans", sans-serif;}
.viewbar{
    position: absolute;
    top: 4px;
    left: 0;
    right: 3px;
    display: flex;
    align-items: center;
    justify-content: center;
}
.viewbar button{
    display: flex;
    align-items: center;
    width: 26px;
    padding-left: 4px;
}
.viewbar .dd{width: 38px; gap: 5px;}
.viewbar button svg:first-child{width: 18px; height: 18px;}
.c-layer{width: 120px; margin-left: 1px;}
.c-layer svg{position: absolute; left: 2px; top: 2px; width: 36px; height: 18px;}
.c-layer select{padding-left: 38px;}
.hint{
    position: absolute;
    left: 15px;
    top: 26px;
    font: 13px/16px "Liberation Sans", Arial, sans-serif;
    color: #000;
}
.measure{
    position: absolute;
    left: 5px;
    bottom: 1px;
    font-size: 15px;
    line-height: 20px;
    color: #111;
}

/* status bar */
.status{
    display: flex;
    align-items: center;
    justify-content: space-between;
    flex: none;
    height: 27px;
    padding: 2px 2px 0 6px;
    color: #333;
}
.status-right{
    display: flex;
    align-items: center;
    gap: 6px;
    height: 25px;
    padding-left: 7px;
    border-left: 1px solid #8d9196;
}
.status-right button{
    display: flex;
    align-items: center;
    justify-content: center;
    width: 23px;
    height: 22px;
}
.status-right svg{width: 16px; height: 16px;}
.status-right input{
    width: 349px;
    height: 22px;
    border: 1px solid #b4bdc6;
    background: #fff;
}
```
